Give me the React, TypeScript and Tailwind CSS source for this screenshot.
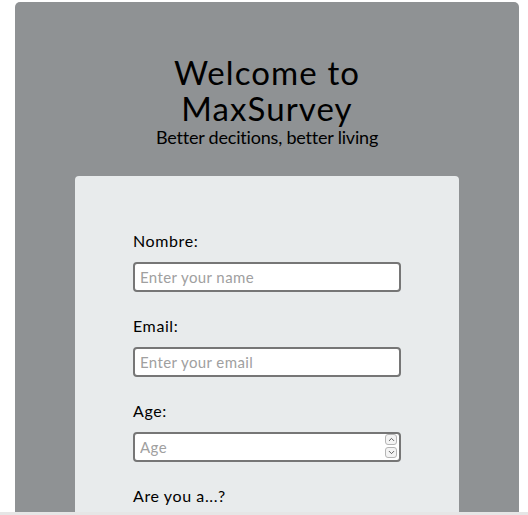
import { ChevronDown, ChevronUp } from "lucide-react";

const inputClass =
  "mt-[11px] block h-[30px] w-[268px] rounded-[4px] border-2 border-[#767676] bg-white px-[5px] text-[15px] tracking-[0.4px] placeholder:text-[#a0a0a0] outline-none";

export default function App() {
  const font = { fontFamily: "Lato, 'Open Sans', sans-serif" };

  return (
    <div className="min-h-[515px] bg-white" style={font}>
      <div className="ml-[15px] mt-[2px] w-[504px] rounded-t-[5px] bg-[#8f9294] pt-[52px] h-[510px] overflow-hidden">
        <header className="text-center text-black">
          <h1 className="mx-auto w-[240px] text-[33px] leading-[36px] tracking-[1.1px]">
            Welcome to MaxSurvey
          </h1>
          <p className="text-[18px] leading-[22px] tracking-[-0.2px]">Better decitions, better living</p>
        </header>

        <form className="mx-[60px] mt-[28px] rounded-[4px] bg-[#e8ebec] px-[58px] pt-[55px] pb-10">
          <label className="block text-base leading-5 tracking-[0.6px] text-black">Nombre:</label>
          <input type="text" placeholder="Enter your name" className={inputClass} />

          <label className="mt-[24px] block text-base leading-5 tracking-[0.6px] text-black">Email:</label>
          <input type="email" placeholder="Enter your email" className={inputClass} />

          <label className="mt-[24px] block text-base leading-5 tracking-[0.6px] text-black">Age:</label>
          <div className="relative w-[268px]">
            <input type="text" inputMode="numeric" placeholder="Age" className={inputClass} />
            <div className="absolute right-[4px] top-[2px] flex flex-col gap-[2px]">
              <span className="flex h-[11px] w-[12px] items-center justify-center rounded-[3px] border border-[#b5b5b5] bg-[#f4f4f4] text-[#555]">
                <ChevronUp size={9} strokeWidth={2.5} />
              </span>
              <span className="flex h-[11px] w-[12px] items-center justify-center rounded-[3px] border border-[#b5b5b5] bg-[#f4f4f4] text-[#555]">
                <ChevronDown size={9} strokeWidth={2.5} />
              </span>
            </div>
          </div>

          <p className="mt-[24px] text-base leading-5 tracking-[0.6px] text-black">Are you a...?</p>
        </form>
      </div>
      <div className="fixed bottom-0 left-0 h-[3px] w-full bg-[#e6e6e6]" />
    </div>
  );
}
